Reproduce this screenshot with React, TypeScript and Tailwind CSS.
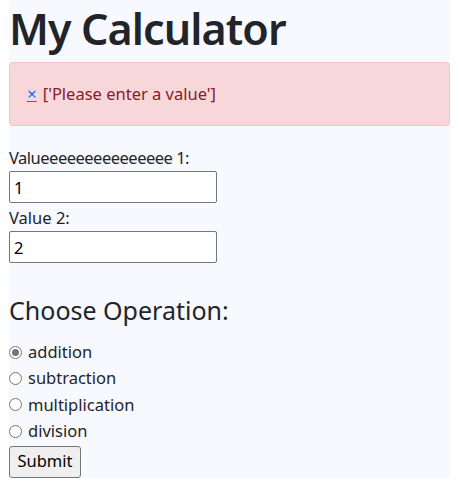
import { useState } from 'react';

const operations = ['addition', 'subtraction', 'multiplication', 'division'];

function App() {
  const [op, setOp] = useState('addition');

  return (
    <div className="mx-[9px] bg-[#f8f9fe] text-[#212529] font-['Noto_Sans',sans-serif]">
      <h1 className="h-[62px] pt-[1px] text-[43px] font-semibold leading-[56px] tracking-[-0.9px]">
        My Calculator
      </h1>
      <div className="flex h-[64px] items-center rounded-[4px] border border-[#f5c2c7] bg-[#f8d7da] px-[17px] text-[16.5px] text-[#842029]">
        <a href="#" className="mr-[6px] text-[17px] text-[#0d6efd] underline">
          ×
        </a>
        <span>['Please enter a value']</span>
      </div>
      <form className="pt-[20px]">
        <label className="block h-[25px] text-[16.5px] leading-[24px] tracking-[-0.5px]">
          Valueeeeeeeeeeeeeee 1:
        </label>
        <input
          defaultValue="1"
          className="block h-[32px] w-[208px] rounded-[2px] border border-[#767676] bg-white px-[4px] text-[16.5px] text-black"
        />
        <label className="block h-[28px] pt-[3px] text-[16.5px] leading-[24px]">
          Value 2:
        </label>
        <input
          defaultValue="2"
          className="block h-[32px] w-[208px] rounded-[2px] border border-[#767676] bg-white px-[4px] text-[16.5px] text-black"
        />
        <h3 className="mt-[28px] h-[48px] text-[25px] font-normal leading-[38px]">
          Choose Operation:
        </h3>
        {operations.map((name) => (
          <label
            key={name}
            onClick={() => setOp(name)}
            className="flex h-[26.4px] items-center text-[16.5px]"
          >
            <span className="mr-[6px] flex h-[13px] w-[13px] items-center justify-center rounded-full border border-[#767676] bg-white">
              {op === name && <span className="h-[7px] w-[7px] rounded-full bg-[#767676]" />}
            </span>
            {name}
          </label>
        ))}
        <button
          type="button"
          className="mt-[1px] h-[32px] w-[72px] rounded-[3px] border border-[#767676] bg-[#efefef] text-[16.5px] text-black"
        >
          Submit
        </button>
      </form>
    </div>
  );
}

export default App;
